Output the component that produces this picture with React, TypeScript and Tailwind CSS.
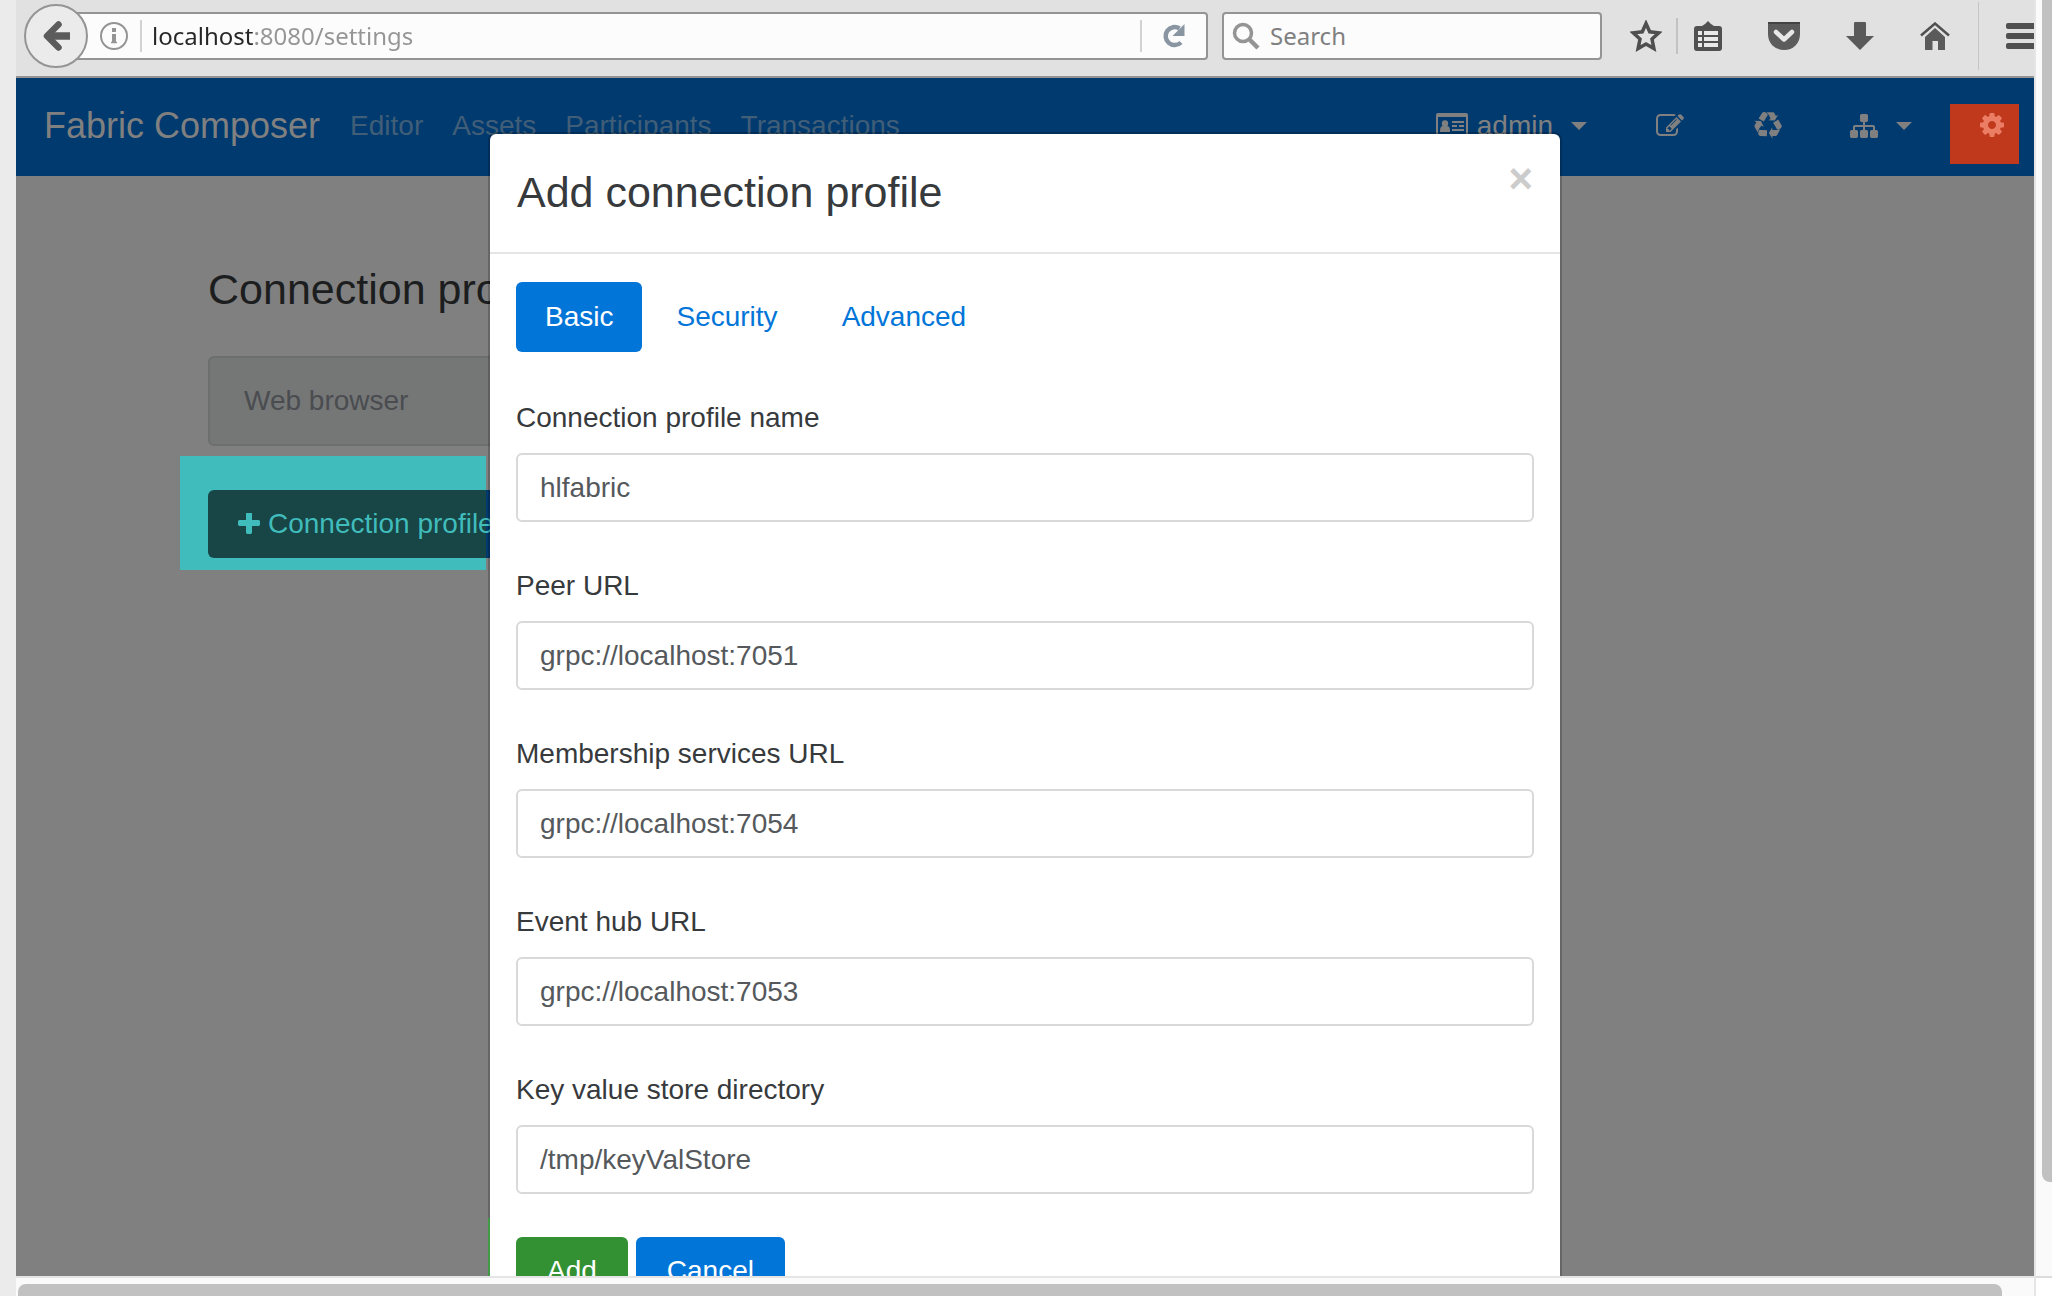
import React from "react";

type IconProps = { className?: string };

const BackArrow = () => (
  <svg viewBox="0 0 28 32" className="h-8 w-7" fill="none" stroke="#5c5c5c" strokeWidth="6.5" strokeLinecap="round" strokeLinejoin="round">
    <path d="M16.500 4.500L5 16l11.500 11.500" />
    <path d="M7 16h21" strokeLinecap="butt" strokeWidth="7.500" />
  </svg>
);

const InfoIcon = () => (
  <svg viewBox="0 0 28 28" className="h-7 w-7 shrink-0" fill="none" stroke="#949494">
    <circle cx="14" cy="14" r="13" strokeWidth="2" />
    <path d="M14 6v4M14 12v9" strokeWidth="4" />
    <path d="M12 13h2M11 20.500h6" strokeWidth="1.500" />
  </svg>
);

const ReloadIcon = () => (
  <svg viewBox="0 0 24 26" className="h-[26px] w-6" fill="none">
    <path d="M17.500 5.500A9 9 0 1 0 19 19.500" stroke="#8995a1" strokeWidth="4.500" />
    <path d="M22.500 1v12h-12z" fill="#8995a1" />
  </svg>
);

const SearchIcon = () => (
  <svg viewBox="0 0 28 28" className="h-7 w-7 shrink-0" fill="none" stroke="#949494">
    <circle cx="11" cy="11" r="8.500" strokeWidth="3.500" />
    <path d="M17 17l9 9" strokeWidth="4.500" />
  </svg>
);

const StarIcon = () => (
  <svg viewBox="0 0 32 32" className="h-8 w-8" fill="none" stroke="#4e4e4e" strokeWidth="3.500">
    <path d="M16 3.500l3.700 8.300 9 1-6.700 6.200 1.900 9.500L16 24l-7.900 4.500L10 19l-6.700-6.200 9-1z" />
  </svg>
);

const ClipboardIcon = () => (
  <svg viewBox="0 0 28 30" className="h-[30px] w-7" fill="#505050">
    <path d="M3 5h5l3-2 3-3 3 3 3 2h5q3 0 3 3v19q0 3-3 3H3q-3 0-3-3V8q0-3 3-3z" />
    <path d="M4 10h4v4H4zM10 10h14v4H10zM4 16h4v4H4zM10 16h14v4H10zM4 22h4v4H4zM10 22h14v4H10z" fill="#e8e8e8" />
  </svg>
);

const PocketIcon = () => (
  <svg viewBox="0 0 32 28" className="h-7 w-8">
    <path d="M2 0h28q2 0 2 2v10q0 7-4.500 11.500T16 28 4.500 23.500 0 12V2q0-2 2-2z" fill="#5c5c5c" />
    <path d="M0 1h32" stroke="#444" strokeWidth="2" />
    <path d="M8 10l8 7.500 8-7.500" fill="none" stroke="#e8e8e8" strokeWidth="4.500" strokeLinecap="round" strokeLinejoin="round" />
  </svg>
);

const DownloadIcon = () => (
  <svg viewBox="0 0 28 28" className="h-7 w-7" fill="#5a5a5a">
    <path d="M8 1q0-1 1-1h10q1 0 1 1v13h8L14 28 0 14h8z" />
  </svg>
);

const HomeIcon = () => (
  <svg viewBox="0 0 30 28" className="h-7 w-[30px]">
    <path d="M1 13.500L15 1.500l14 12" fill="none" stroke="#505050" strokeWidth="2.500" />
    <path d="M5 15L15 6l10 9v13h-7v-9h-5.500v9H5z" fill="#5a5a5a" />
  </svg>
);

const MenuIcon = () => (
  <svg viewBox="0 0 34 26" className="h-[26px] w-[34px]" fill="#505050">
    <rect width="34" height="6" rx="2" />
    <rect y="10" width="34" height="6" rx="2" />
    <rect y="20" width="34" height="6" rx="2" />
  </svg>
);

const IdCardIcon = () => (
  <svg viewBox="0 0 32 26" className="h-[26px] w-8" fill="#808080">
    <path fillRule="evenodd" d="M2 0h28q2 0 2 2v22q0 2-2 2H2q-2 0-2-2V2q0-2 2-2zM2 4v19q0 1 1 1h26q1 0 1-1V4z" />
    <circle cx="9" cy="10.500" r="3.200" />
    <path d="M4 18q0-5 3-5h4q3 0 3 5v1H4zM16 8h12v2H16zM16 12h5v2h-5zM23 12h5v2h-5zM16 16h12v2H16z" />
  </svg>
);

const EditIcon = ({ className }: IconProps) => (
  <svg viewBox="0 0 1792 1792" className={className} fill="currentColor">
    <path d="M888 1184l116-116-152-152-116 116v56h96v96h56zm440-720q-16-16-33 1l-350 350q-17 17-1 33t33-1l350-350q17-17 1-33zm80 594v190q0 119-84.500 203.500t-203.500 84.500h-832q-119 0-203.500-84.500t-84.500-203.500v-832q0-119 84.500-203.500t203.500-84.500h832q63 0 117 25 15 7 18 23 3 17-9 29l-49 49q-14 14-32 8-23-6-45-6h-832q-66 0-113 47t-47 113v832q0 66 47 113t113 47h832q66 0 113-47t47-113v-126q0-13 9-22l64-64q15-15 35-7t20 29zm-96-738l288 288-672 672h-288v-288zm444 132l-92 92-288-288 92-92q28-28 68-28t68 28l152 152q28 28 28 68t-28 68z" />
  </svg>
);

const RecycleIcon = ({ className }: IconProps) => (
  <svg viewBox="0 0 1792 1792" className={className} fill="currentColor">
    <path d="M836 1169l-15 368-2 22-420-29q-36-3-67-31.500t-47-65.500q-11-27-14.500-55t4-65 12-55 21.500-64 19-53q78 12 509 28zm-387-586l180 379-147-92q-63 72-111.500 144.500t-72.500 125-39.500 94.500-18.500 63l-4 21-190-357q-17-26-18-56t6-47l8-18q35-63 114-188l-140-86zm1231 517l-188 359q-12 29-36.500 46.500t-43.500 20.500l-18 4q-71 7-219 12l8 164-230-367 211-362 7 173q170 16 283 5t170-33zm-785-924q-47 63-265 435l-317-187-19-12 225-356q20-31 60-45t80-10q24 2 48.500 12t42 21 41.500 33 36 34.500 36 39.500 32 35zm655 307l212 363q18 37 12.500 76t-27.500 74q-13 20-33 37t-38 28-48.500 22-47 16-51.500 14-46 12q-34-72-265-436l313-195zm-143-226l142-83-220 373-419-20 151-86q-34-89-75-166t-75.500-123.500-64.500-80-47-46.500l-17-13 405 1q31-3 58 10.500t39 28.500l11 15q39 61 112 190z" />
  </svg>
);

const SitemapIcon = ({ className }: IconProps) => (
  <svg viewBox="0 0 1792 1792" className={className} fill="currentColor">
    <path d="M1792 1248v320q0 40-28 68t-68 28h-320q-40 0-68-28t-28-68v-320q0-40 28-68t68-28h96v-192h-512v192h96q40 0 68 28t28 68v320q0 40-28 68t-68 28h-320q-40 0-68-28t-28-68v-320q0-40 28-68t68-28h96v-192h-512v192h96q40 0 68 28t28 68v320q0 40-28 68t-68 28h-320q-40 0-68-28t-28-68v-320q0-40 28-68t68-28h96v-192q0-52 38-90t90-38h512v-192h-96q-40 0-68-28t-28-68v-320q0-40 28-68t68-28h320q40 0 68 28t28 68v320q0 40-28 68t-68 28h-96v192h512q52 0 90 38t38 90v192h96q40 0 68 28t28 68z" />
  </svg>
);

const CogIcon = ({ className }: IconProps) => (
  <svg viewBox="0 0 1792 1792" className={className} fill="currentColor">
    <path d="M1152 896q0-106-75-181t-181-75-181 75-75 181 75 181 181 75 181-75 75-181zm512-109v222q0 12-8 23t-20 13l-185 28q-19 54-39 91 35 50 107 138 10 12 10 25t-9 23q-27 37-99 108t-94 71q-12 0-26-9l-138-108q-44 23-91 38-16 136-29 186-7 28-36 28h-222q-14 0-24.500-8.500t-11.500-21.500l-28-184q-49-16-90-37l-141 107q-10 9-25 9-14 0-25-11-126-114-165-168-7-10-7-23 0-12 8-23 15-21 51-66.500t54-70.500q-27-50-41-99l-183-27q-13-2-21-12.500t-8-23.500v-222q0-12 8-23t19-13l186-28q14-46 39-92-40-57-107-138-10-12-10-24 0-10 9-23 26-36 98.500-107.500t94.500-71.500q13 0 26 10l138 107q44-23 91-38 16-136 29-186 7-28 36-28h222q14 0 24.500 8.500t11.500 21.500l28 184q49 16 90 37l142-107q9-9 24-9 13 0 25 10 129 119 165 170 7 8 7 22 0 12-8 23-15 21-51 66.500t-54 70.500q26 50 41 98l183 28q13 2 21 12.500t8 23.500z" />
  </svg>
);

const PlusIcon = ({ className }: IconProps) => (
  <svg viewBox="192 192 1408 1408" className={className} fill="currentColor">
    <path d="M1600 736v192q0 40-28 68t-68 28h-416v416q0 40-28 68t-68 28h-192q-40 0-68-28t-28-68v-416h-416q-40 0-68-28t-28-68v-192q0-40 28-68t68-28h416v-416q0-40 28-68t68-28h192q40 0 68 28t28 68v416h416q40 0 68 28t28 68z" />
  </svg>
);

const Caret = () => (
  <svg viewBox="0 0 16 8" className="h-2 w-4" fill="#808080">
    <path d="M0 0h16L8 8z" />
  </svg>
);

function BrowserToolbar() {
  return (
    <header className="flex h-[78px] shrink-0 items-center overflow-hidden border-b-2 border-[#949494] bg-[#e1e1e1] pb-1 pl-2 font-['Noto_Sans',sans-serif] text-2xl">
      <button aria-label="Back" className="z-10 flex h-16 w-16 shrink-0 items-center justify-center rounded-full border-2 border-[#949494] bg-[#ebebeb]">
        <BackArrow />
      </button>
      <div className="-ml-4 flex h-12 min-w-0 flex-1 items-center rounded-r-sm border-2 border-[#949494] bg-[#fcfcfc] pl-[26px]">
        <InfoIcon />
        <span className="mr-[10px] ml-3 h-8 w-[2px] shrink-0 bg-[#d2d2d2]" />
        <input
          aria-label="Address"
          defaultValue="localhost:8080/settings"
          className="min-w-0 flex-1 bg-linear-to-r from-[#262626] from-[101px] to-[#959595] to-[101px] bg-clip-text text-transparent outline-none"
        />
        <span className="h-8 w-[2px] shrink-0 bg-[#d2d2d2]" />
        <button aria-label="Reload" className="flex w-16 shrink-0 items-center justify-center">
          <ReloadIcon />
        </button>
      </div>
      <label className="ml-[14px] flex h-12 w-[380px] shrink-0 items-center gap-2 rounded-sm border-2 border-[#949494] bg-[#fcfcfc] pl-2">
        <SearchIcon />
        <input aria-label="Search" placeholder="Search" className="min-w-0 flex-1 pl-[2px] outline-none placeholder:text-[#808080]" />
      </label>
      <div className="flex shrink-0 items-center pl-7">
        <button aria-label="Bookmark"><StarIcon /></button>
        <span className="ml-[14px] mr-4 h-9 w-[2px] bg-[#c2c2c2]" />
        <button aria-label="Bookmarks list"><ClipboardIcon /></button>
        <button aria-label="Pocket" className="ml-[46px]"><PocketIcon /></button>
        <button aria-label="Downloads" className="ml-[46px]"><DownloadIcon /></button>
        <button aria-label="Home" className="ml-[46px]"><HomeIcon /></button>
        <span className="ml-7 mr-[27px] h-[68px] w-px bg-[#c6c6c6]" />
        <button aria-label="Menu" className="w-7 overflow-hidden"><MenuIcon /></button>
      </div>
    </header>
  );
}

function NavBar() {
  return (
    <nav className="flex h-[98px] items-center bg-[#003a6e] pr-[15px] pb-[2px] pl-7 text-[#808080]">
      <a href="#home" className="mr-[30px] text-[36px] leading-[50px]">Fabric Composer</a>
      <div className="flex gap-[29px] text-[#405e78]">
        {["Editor", "Assets", "Participants", "Transactions"].map((name) => (
          <a key={name} href={"#" + name.toLowerCase()}>{name}</a>
        ))}
      </div>
      <div className="ml-auto flex items-center">
        <button className="flex items-center">
          <IdCardIcon />
          <span className="mr-[18px] ml-[9px]">admin</span>
          <Caret />
        </button>
        <button aria-label="Edit" className="ml-[69px]"><EditIcon className="size-7" /></button>
        <button aria-label="Recycle" className="ml-[70px]"><RecycleIcon className="size-7" /></button>
        <button aria-label="Network" className="ml-[68px] flex items-center gap-[18px]">
          <SitemapIcon className="size-7" />
          <Caret />
        </button>
        <button aria-label="Settings" className="mt-4 ml-[38px] flex h-[60px] w-[69px] justify-end bg-[#c0391d] pt-[7px] pr-[13px] text-[#ea7d64]">
          <CogIcon className="size-7" />
        </button>
      </div>
    </nav>
  );
}

const FIELDS = [
  { id: "name", label: "Connection profile name", value: "hlfabric" },
  { id: "peer", label: "Peer URL", value: "grpc://localhost:7051" },
  { id: "membership", label: "Membership services URL", value: "grpc://localhost:7054" },
  { id: "eventhub", label: "Event hub URL", value: "grpc://localhost:7053" },
  { id: "keystore", label: "Key value store directory", value: "/tmp/keyValStore" },
];

function ProfileDialog() {
  return (
    <section role="dialog" aria-labelledby="dialog-title" className="w-full max-w-[1074px] rounded-lg border-2 border-black/20 bg-white bg-clip-padding text-[#373a3c]">
      <div className="flex items-start justify-between border-b-2 border-[#e5e5e5] px-[27px] pt-[26px] pb-7">
        <h2 id="dialog-title" className="text-[43px] leading-[64px]">Add connection profile</h2>
        <button aria-label="Close" className="text-[42px] leading-[38px] font-bold text-[#ccc]">×</button>
      </div>
      <div className="px-[26px] pt-7">
        <div role="tablist" className="mb-[46px] flex gap-1">
          {["Basic", "Security", "Advanced"].map((tab, i) => (
            <button
              key={tab}
              role="tab"
              aria-selected={i === 0}
              className={i === 0 ? "h-[70px] rounded-md bg-[#0275d8] px-[29px] text-white" : "h-[70px] rounded-md px-[30px] text-[#0275d8]"}
            >
              {tab}
            </button>
          ))}
        </div>
        <form>
          <div className="flex flex-col gap-11">
            {FIELDS.map((f) => (
              <div key={f.id}>
                <label htmlFor={f.id} className="mb-[15px] block leading-10">{f.label}</label>
                <input id={f.id} defaultValue={f.value} className="block h-[69px] w-full rounded-md border-2 border-[#d9d9d9] px-[22px] text-[#55595c] outline-none" />
              </div>
            ))}
          </div>
          <div className="mt-6 -ml-7 flex gap-2 border-l-2 border-[#419a45] pt-[19px] pb-7 pl-[26px]">
            <button type="button" className="h-[68px] rounded-md bg-[#339133] px-[31px] text-white">Add</button>
            <button type="button" className="h-[68px] rounded-md bg-[#0275d8] px-[31px] text-white">Cancel</button>
          </div>
        </form>
      </div>
    </section>
  );
}

export default function App() {
  return (
    <div className="flex h-screen overflow-hidden bg-[#ebebeb] pl-4 font-['Liberation_Sans',Arial,sans-serif] text-[28px] leading-[42px]">
      <div className="flex min-w-0 flex-1 flex-col">
        <BrowserToolbar />
        <div className="relative flex-1 overflow-hidden bg-[#808080]">
          <NavBar />
          <main className="px-48 pt-[81px]">
            <h1 className="text-[43px] leading-[64px] text-[#1c1d1e]">Connection profiles</h1>
            <div className="mt-[35px] h-[90px] w-3/5 rounded-md border-2 border-[#6d6f6f] bg-[#757777] px-[34px] py-[22px] text-[#4a4c50]">Web browser</div>
            <div className="mt-[10px] -ml-7 h-[114px] w-[306px] bg-[#40bcbc] pt-[34px] pl-7">
              <button className="flex h-[68px] w-[340px] items-center rounded-md bg-linear-to-r from-[#184545] from-[278px] to-[#003a6e] to-[278px] pl-[30px] whitespace-nowrap text-[#40bcbc]">
                <PlusIcon className="mr-2 size-[22px]" />
                Connection profile
              </button>
            </div>
          </main>
          <div className="absolute inset-x-0 top-[54px] flex justify-center">
            <ProfileDialog />
          </div>
        </div>
        <div className="h-5 shrink-0 border-t-2 border-[#e5e5e5] bg-[#fafafa] pt-[6px] pr-8 pl-[2px]">
          <div className="h-3 rounded-t-lg bg-[#c1c1c1]" />
        </div>
      </div>
      <aside className="flex w-[18px] shrink-0 flex-col border-l-2 border-[#e5e5e5] bg-[#fafafa]">
        <div className="flex-1 pb-[94px] pl-[6px]">
          <div className="h-full rounded-bl-lg bg-[#c1c1c1]" />
        </div>
        <div className="h-5 border-t-2 border-[#dcdcdc] bg-white" />
      </aside>
    </div>
  );
}
